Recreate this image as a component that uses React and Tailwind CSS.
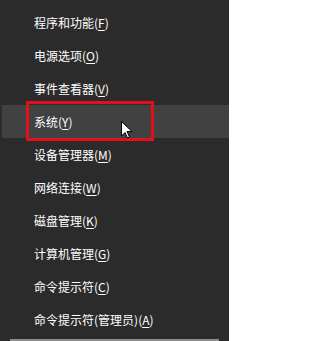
import React from "react";

const items = [
  { label: "程序和功能", key: "F" },
  { label: "电源选项", key: "O" },
  { label: "事件查看器", key: "V" },
  { label: "系统", key: "Y", active: true },
  { label: "设备管理器", key: "M" },
  { label: "网络连接", key: "W" },
  { label: "磁盘管理", key: "K" },
  { label: "计算机管理", key: "G" },
  { label: "命令提示符", key: "C" },
  { label: "命令提示符(管理员)", key: "A" },
];

const Cursor = () => (
  <svg width="12" height="18" viewBox="0 0 12 18" className="absolute left-[119px] top-[16px]">
    <path d="M0.5 0.5 L0.5 15 L4 11.5 L6.5 17 L8.5 16 L6 10.5 L11 10.5 Z" fill="#ffffff" stroke="#000000" strokeWidth="1" />
  </svg>
);

const MenuRow = ({ label, hotkey, active }) => (
  <div
    className={`relative ml-[2px] flex h-[33px] items-center pl-[32px] text-[12px] text-white ${
      active ? "bg-[#414141]" : ""
    }`}
  >
    <span>
      {label}(<span className="underline underline-offset-2">{hotkey}</span>)
    </span>
    {active ? (
      <>
        <div className="absolute left-[24px] top-[-4px] h-[40px] w-[128px] border-[3px] border-[#e3101c]" />
        <Cursor />
      </>
    ) : null}
  </div>
);

export default function App() {
  return (
    <div
      className="flex h-[341px] w-[229px] flex-col overflow-hidden bg-[#2b2b2b] pt-[6px]"
      style={{ fontFamily: '"Noto Sans CJK SC", "Noto Sans", sans-serif' }}
    >
      {items.map((item) => (
        <MenuRow key={item.key} label={item.label} hotkey={item.key} active={item.active} />
      ))}
      <div className="mx-[10px] mt-[3px] h-[2px] bg-[#8c8c8c]" />
    </div>
  );
}
